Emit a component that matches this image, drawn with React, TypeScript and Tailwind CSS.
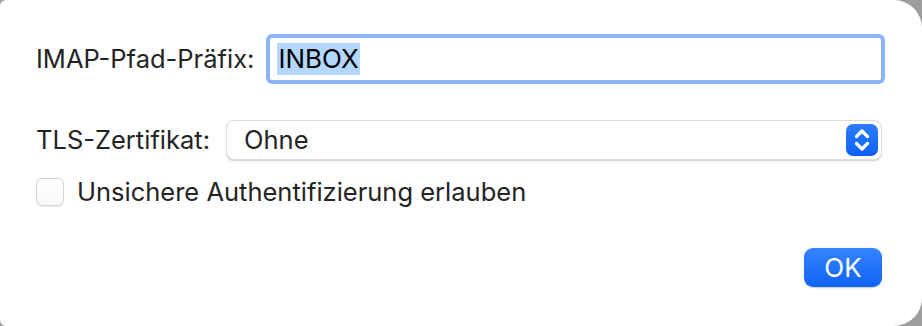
export default function App() {
  return (
    <div className="w-[922px] h-[326px] bg-[#9d9d9d] font-['Inter','Liberation_Sans',sans-serif] text-[#242424]">
      <div className="w-full h-full bg-white rounded-tl-[6px] rounded-bl-[6px] rounded-tr-[28px] rounded-br-[28px] pl-[36px] pr-[40px] pt-[34px] flex flex-col">
        {/* prefix field */}
        <div className="flex items-center gap-[12px] mr-[-3px]">
          <span className="text-[25.5px] leading-none whitespace-nowrap">IMAP-Pfad-Präfix:</span>
          <div className="flex-1 h-[50px] rounded-[6px] border-[4px] border-[#8cb5f8] bg-white flex items-center pl-[7px]">
            <span className="bg-[#b3d7ff] text-black text-[26px] leading-[32px] px-[1px]">INBOX</span>
          </div>
        </div>

        {/* tls popup */}
        <div className="flex items-center gap-[16px] mt-[36px]">
          <span className="text-[25.5px] leading-none whitespace-nowrap">TLS-Zertifikat:</span>
          <div className="flex-1 h-[40px] rounded-[8px] border border-[#dcdcdc] bg-white shadow-[0_1px_1.5px_rgba(0,0,0,0.2)] flex items-center justify-between pl-[17px] pr-[3px]">
            <span className="text-[25.5px] leading-none">Ohne</span>
            <div className="w-[32px] h-[32px] rounded-[7px] bg-gradient-to-b from-[#2d7cff] to-[#0a61f4] flex items-center justify-center">
              <svg width="18" height="26" viewBox="0 0 18 26" fill="none" stroke="white" strokeWidth="3.2" strokeLinecap="round" strokeLinejoin="round">
                <path d="M3.5 9.5 L9 4 L14.5 9.5" />
                <path d="M3.5 16.5 L9 22 L14.5 16.5" />
              </svg>
            </div>
          </div>
        </div>

        {/* checkbox */}
        <div className="flex items-center gap-[13px] mt-[18px]">
          <div className="w-[28px] h-[28px] rounded-[6px] border border-[#d4d4d4] bg-gradient-to-b from-white to-[#f8f8f8] shadow-[0_0.5px_1px_rgba(0,0,0,0.08)]" />
          <span className="text-[25.5px] leading-none whitespace-nowrap">Unsichere Authentifizierung erlauben</span>
        </div>

        {/* button */}
        <div className="flex justify-end mt-[42px]">
          <button className="w-[78px] h-[39px] rounded-[9px] bg-gradient-to-b from-[#3584ff] to-[#0b63f6] text-white text-[26px] leading-none flex items-center justify-center shadow-[0_0.5px_1.5px_rgba(0,0,0,0.2)]">
            OK
          </button>
        </div>
      </div>
    </div>
  )
}
